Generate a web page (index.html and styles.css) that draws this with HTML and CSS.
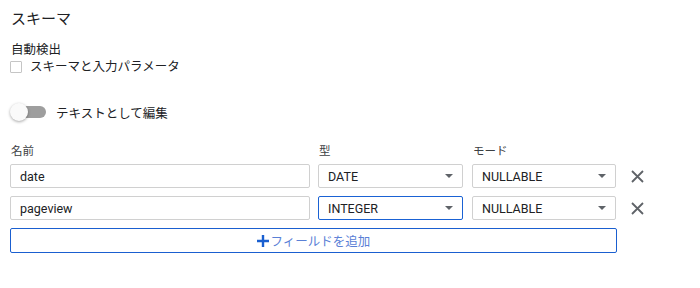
FILE: index.html
```html
<!DOCTYPE html>
<html lang="ja">
<head>
    <meta charset="UTF-8">
    <title>スキーマ</title>
    <link rel="stylesheet" href="styles.css">
</head>
<body>
    <div class="schema">
        <div class="schema-title">スキーマ</div>

        <div class="auto-detect">
            <div class="auto-label">自動検出</div>
            <label class="check-row">
                <span class="checkbox"></span>
                <span>スキーマと入力パラメータ</span>
            </label>
        </div>

        <div class="toggle-row">
            <span class="toggle">
                <span class="toggle-track"></span>
                <span class="toggle-knob"></span>
            </span>
            <span>テキストとして編集</span>
        </div>

        <div class="fields">
            <div class="col-label">名前</div>
            <div class="col-label">型</div>
            <div class="col-label">モード</div>
            <div></div>

            <div class="input">date</div>
            <div class="select">DATE<span class="arrow"></span></div>
            <div class="select">NULLABLE<span class="arrow"></span></div>
            <div class="remove">
                <svg width="13" height="13" viewBox="0 0 13 13"><path d="M1 1L12 12M12 1L1 12" stroke="#5f6368" stroke-width="1.8"/></svg>
            </div>

            <div class="input">pageview</div>
            <div class="select focused">INTEGER<span class="arrow"></span></div>
            <div class="select">NULLABLE<span class="arrow"></span></div>
            <div class="remove">
                <svg width="13" height="13" viewBox="0 0 13 13"><path d="M1 1L12 12M12 1L1 12" stroke="#5f6368" stroke-width="1.8"/></svg>
            </div>
        </div>

        <div class="add-field">
            <svg width="12" height="12" viewBox="0 0 12 12"><path d="M6 0V12M0 6H12" stroke="#1a5fd0" stroke-width="2.4"/></svg>
            <span>フィールドを追加</span>
        </div>
    </div>
</body>
</html>
```

FILE: styles.css
```css
body {
    margin: 0;
    background: white;
    font-family: Roboto, "Noto Sans CJK JP", sans-serif;
    color: #202124;
}

.schema {
    padding: 9px 10px;
    width: 607px;
}

.schema-title {
    font-size: 15px;
    line-height: 20px;
    padding-left: 1px;
}

.auto-detect {
    margin-top: 13px;
    font-size: 12.5px;
}

.auto-label {
    line-height: 16px;
    padding-left: 1px;
}

.check-row {
    display: flex;
    align-items: center;
    gap: 8px;
    margin-top: 1px;
    line-height: 16px;
}

.checkbox {
    width: 10px;
    height: 10px;
    border: 1px solid #c5c5c5;
    border-radius: 1px;
}

.toggle-row {
    display: flex;
    align-items: center;
    gap: 10px;
    margin-top: 27px;
    font-size: 12.5px;
}

.toggle {
    position: relative;
    width: 36px;
    height: 20px;
    display: flex;
    align-items: center;
}

.toggle-track {
    margin-left: 11px;
    width: 25px;
    height: 12px;
    border-radius: 6px;
    background: #9e9e9e;
}

.toggle-knob {
    position: absolute;
    left: 0;
    top: 1px;
    width: 18px;
    height: 18px;
    border-radius: 50%;
    background: #fafafa;
    box-shadow: 0 1px 3px rgba(0, 0, 0, 0.35);
}

.fields {
    display: grid;
    grid-template-columns: 300px 145px 145px 24px;
    column-gap: 8px;
    margin-top: 21px;
    font-size: 12.5px;
}

.fields > :nth-child(4n+3) {
    margin-left: 1px;
}

.col-label {
    font-size: 11.5px;
    color: #3c4043;
    line-height: 16px;
    margin-bottom: 5px;
    padding-left: 1px;
}

.input,
.select {
    height: 22px;
    border: 1px solid #d0d0d0;
    border-radius: 2px;
    padding: 0 9px;
    display: flex;
    align-items: center;
    margin-bottom: 8px;
}

.select {
    justify-content: space-between;
}

.select.focused {
    border-color: #1a62d4;
}

.arrow {
    width: 0;
    height: 0;
    border-left: 4px solid transparent;
    border-right: 4px solid transparent;
    border-top: 4px solid #5f6368;
}

.remove {
    display: flex;
    align-items: center;
    height: 24px;
    padding-left: 7px;
}

.remove svg {
    flex-shrink: 0;
}

.add-field {
    height: 23px;
    border: 1px solid #1a5fd0;
    border-radius: 2px;
    display: flex;
    justify-content: center;
    align-items: center;
    gap: 2px;
    color: #5a80d6;
    font-size: 12.5px;
}
```
